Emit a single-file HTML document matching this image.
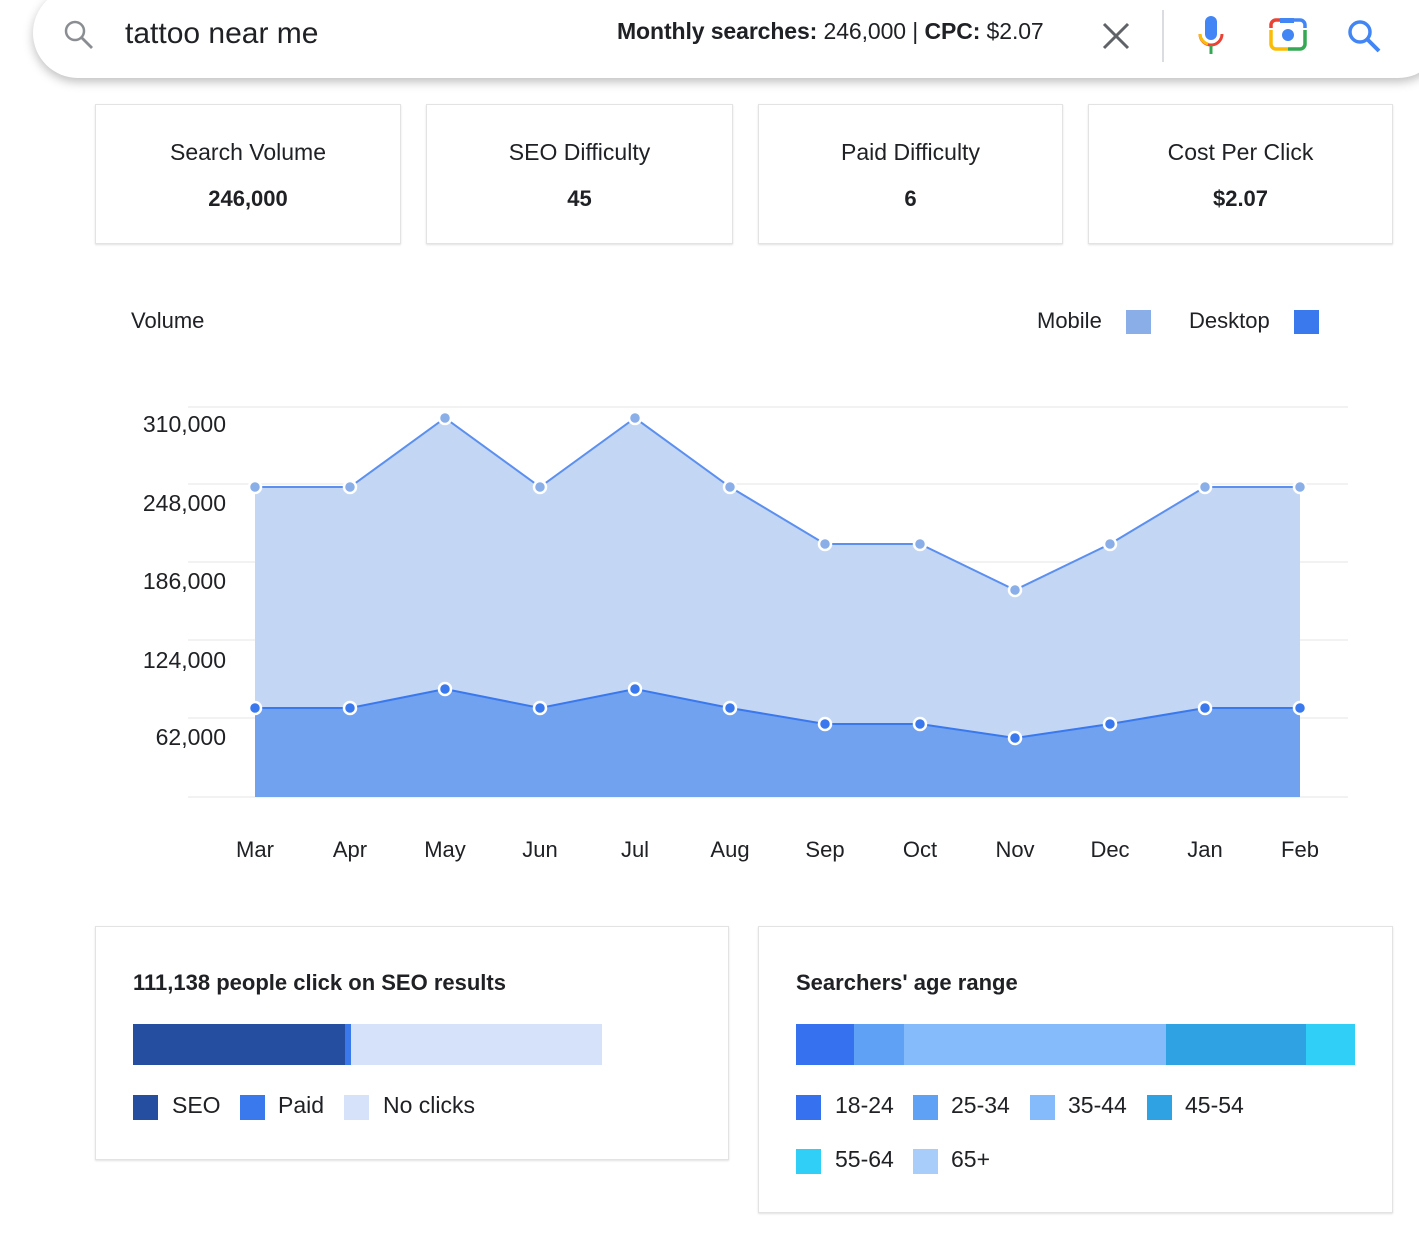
<!DOCTYPE html>
<html><head><meta charset="utf-8"><style>
*{margin:0;padding:0;box-sizing:border-box}
body{width:1419px;height:1257px;background:#fff;font-family:"Liberation Sans",Arial,sans-serif;color:#202124;position:relative;overflow:hidden}
.bar{position:absolute;left:33px;top:-12px;width:1410px;height:90px;border-radius:45px;background:#fff;box-shadow:0 4px 10px rgba(0,0,0,.25)}
.abs{position:absolute}
.card{position:absolute;top:104px;height:140px;border:1px solid #e3e3e3;box-shadow:0 1px 2px rgba(0,0,0,.12);text-align:center}
.card .t{margin-top:34px;font-size:23px}
.card .v{margin-top:20px;font-size:22px;font-weight:bold}
.box{position:absolute;border:1px solid #e3e3e3;box-shadow:0 1px 2px rgba(0,0,0,.12)}
.lg{position:absolute;font-size:23px}
.sw{position:absolute;width:25px;height:25px}
</style></head><body>
<div class="bar"></div>
<svg class="abs" style="left:62px;top:18px" width="34" height="34" viewBox="0 0 34 34"><circle cx="13" cy="13" r="9" fill="none" stroke="#8a8d91" stroke-width="2.5"/><line x1="19.5" y1="19.5" x2="30" y2="30" stroke="#8a8d91" stroke-width="2.8"/></svg>
<div class="abs" style="left:125px;top:17px;font-size:30px">tattoo near me</div>
<div class="abs" style="left:617px;top:18px;font-size:23px;letter-spacing:-0.1px"><b>Monthly searches:</b> 246,000 | <b>CPC:</b> $2.07</div>
<svg class="abs" style="left:1100px;top:20px" width="32" height="32"><path d="M4 4L28 28M28 4L4 28" stroke="#5f6368" stroke-width="3"/></svg>
<div class="abs" style="left:1162px;top:10px;width:2px;height:52px;background:#dadce0"></div>
<svg class="abs" style="left:1195px;top:14px" width="32" height="44" viewBox="0 0 32 44"><rect x="10" y="2" width="12" height="24" rx="6" fill="#4285f4"/><path d="M5 20a11 11 0 0 0 22 0" fill="none" stroke="#ea4335" stroke-width="3"/><path d="M5 20a11 11 0 0 0 8 10" fill="none" stroke="#fbbc04" stroke-width="3"/><rect x="14.5" y="31" width="3" height="9" fill="#34a853"/></svg>
<svg class="abs" style="left:1267px;top:16px" width="42" height="38" viewBox="0 0 42 38"><path d="M4 12v-3a5 5 0 0 1 5-5h6" fill="none" stroke="#ea4335" stroke-width="3.5"/><path d="M27 4h6a5 5 0 0 1 5 5v3" fill="none" stroke="#4285f4" stroke-width="3.5"/><path d="M4 14v14a5 5 0 0 0 5 5h12" fill="none" stroke="#fbbc04" stroke-width="3.5"/><path d="M21 33h12a5 5 0 0 0 5-5v-14" fill="none" stroke="#34a853" stroke-width="3.5"/><rect x="13" y="2" width="14" height="5" fill="#4285f4"/><circle cx="21" cy="19" r="6" fill="#4285f4"/></svg>
<svg class="abs" style="left:1345px;top:17px" width="38" height="38"><circle cx="15" cy="15" r="10" fill="none" stroke="#4285f4" stroke-width="3.5"/><line x1="22" y1="22" x2="34" y2="34" stroke="#4285f4" stroke-width="4"/></svg>

<div class="card" style="left:95px;width:306px"><div class="t">Search Volume</div><div class="v">246,000</div></div>
<div class="card" style="left:426px;width:307px"><div class="t">SEO Difficulty</div><div class="v">45</div></div>
<div class="card" style="left:758px;width:305px"><div class="t">Paid Difficulty</div><div class="v">6</div></div>
<div class="card" style="left:1088px;width:305px"><div class="t">Cost Per Click</div><div class="v">$2.07</div></div>

<div class="abs" style="left:131px;top:308px;font-size:22px">Volume</div>
<div class="abs" style="left:1037px;top:308px;font-size:22px">Mobile</div>
<div class="abs" style="left:1126px;top:310px;width:25px;height:24px;background:#8aaee8"></div>
<div class="abs" style="left:1189px;top:308px;font-size:22px">Desktop</div>
<div class="abs" style="left:1294px;top:310px;width:25px;height:24px;background:#3a78ee"></div>

<svg class="abs" style="left:0;top:0" width="1419" height="900">
<g stroke="#eeeeee" stroke-width="1.5"><line x1="188" y1="407" x2="1348" y2="407"/><line x1="188" y1="484" x2="1348" y2="484"/><line x1="188" y1="562" x2="1348" y2="562"/><line x1="188" y1="640" x2="1348" y2="640"/><line x1="188" y1="718" x2="1348" y2="718"/><line x1="188" y1="797" x2="1348" y2="797"/></g>
<g font-size="23" fill="#202124" text-anchor="end" font-family="Liberation Sans, sans-serif"><text x="226" y="432">310,000</text><text x="226" y="511">248,000</text><text x="226" y="589">186,000</text><text x="226" y="668">124,000</text><text x="226" y="745">62,000</text></g>
<path d="M255 487L350 487L445 418L540 487L635 418L730 487L825 544L920 544L1015 590L1110 544L1205 487L1300 487L1300 797L255 797Z" fill="#c3d6f3"/>
<path d="M255 487L350 487L445 418L540 487L635 418L730 487L825 544L920 544L1015 590L1110 544L1205 487L1300 487" fill="none" stroke="#5b8ff0" stroke-width="2"/>
<path d="M255 708L350 708L445 689L540 708L635 689L730 708L825 724L920 724L1015 738L1110 724L1205 708L1300 708L1300 797L255 797Z" fill="#71a2ef"/>
<path d="M255 708L350 708L445 689L540 708L635 689L730 708L825 724L920 724L1015 738L1110 724L1205 708L1300 708" fill="none" stroke="#3a78ee" stroke-width="2"/>
<g fill="#8aaee8" stroke="#fff" stroke-width="2.5"><circle cx="255" cy="487" r="6"/><circle cx="350" cy="487" r="6"/><circle cx="445" cy="418" r="6"/><circle cx="540" cy="487" r="6"/><circle cx="635" cy="418" r="6"/><circle cx="730" cy="487" r="6"/><circle cx="825" cy="544" r="6"/><circle cx="920" cy="544" r="6"/><circle cx="1015" cy="590" r="6"/><circle cx="1110" cy="544" r="6"/><circle cx="1205" cy="487" r="6"/><circle cx="1300" cy="487" r="6"/></g>
<g fill="#3a78ee" stroke="#fff" stroke-width="2.5"><circle cx="255" cy="708" r="6"/><circle cx="350" cy="708" r="6"/><circle cx="445" cy="689" r="6"/><circle cx="540" cy="708" r="6"/><circle cx="635" cy="689" r="6"/><circle cx="730" cy="708" r="6"/><circle cx="825" cy="724" r="6"/><circle cx="920" cy="724" r="6"/><circle cx="1015" cy="738" r="6"/><circle cx="1110" cy="724" r="6"/><circle cx="1205" cy="708" r="6"/><circle cx="1300" cy="708" r="6"/></g>
<g font-size="22" fill="#202124" text-anchor="middle" font-family="Liberation Sans, sans-serif"><text x="255" y="857">Mar</text><text x="350" y="857">Apr</text><text x="445" y="857">May</text><text x="540" y="857">Jun</text><text x="635" y="857">Jul</text><text x="730" y="857">Aug</text><text x="825" y="857">Sep</text><text x="920" y="857">Oct</text><text x="1015" y="857">Nov</text><text x="1110" y="857">Dec</text><text x="1205" y="857">Jan</text><text x="1300" y="857">Feb</text></g>
</svg>

<div class="box" style="left:95px;top:926px;width:634px;height:234px"></div>
<div class="abs" style="left:133px;top:970px;font-size:22px;font-weight:bold">111,138 people click on SEO results</div>
<div class="abs" style="left:133px;top:1024px;width:212px;height:41px;background:#264ea0"></div>
<div class="abs" style="left:345px;top:1024px;width:6px;height:41px;background:#3a78ee"></div>
<div class="abs" style="left:351px;top:1024px;width:251px;height:41px;background:#d6e2fa"></div>
<div class="sw" style="left:133px;top:1095px;background:#264ea0"></div><div class="lg" style="left:172px;top:1092px">SEO</div>
<div class="sw" style="left:240px;top:1095px;background:#3a78ee"></div><div class="lg" style="left:278px;top:1092px">Paid</div>
<div class="sw" style="left:344px;top:1095px;background:#d6e2fa"></div><div class="lg" style="left:383px;top:1092px">No clicks</div>

<div class="box" style="left:758px;top:926px;width:635px;height:287px"></div>
<div class="abs" style="left:796px;top:970px;font-size:22px;font-weight:bold">Searchers' age range</div>
<div class="abs" style="left:796px;top:1024px;width:58px;height:41px;background:#3672ef"></div>
<div class="abs" style="left:854px;top:1024px;width:50px;height:41px;background:#5fa1f5"></div>
<div class="abs" style="left:904px;top:1024px;width:262px;height:41px;background:#85bbfa"></div>
<div class="abs" style="left:1166px;top:1024px;width:140px;height:41px;background:#2fa2e4"></div>
<div class="abs" style="left:1306px;top:1024px;width:49px;height:41px;background:#30cff8"></div>
<div class="sw" style="left:796px;top:1095px;background:#3672ef"></div><div class="lg" style="left:835px;top:1092px">18-24</div>
<div class="sw" style="left:913px;top:1095px;background:#5fa1f5"></div><div class="lg" style="left:951px;top:1092px">25-34</div>
<div class="sw" style="left:1030px;top:1095px;background:#85bbfa"></div><div class="lg" style="left:1068px;top:1092px">35-44</div>
<div class="sw" style="left:1147px;top:1095px;background:#2fa2e4"></div><div class="lg" style="left:1185px;top:1092px">45-54</div>
<div class="sw" style="left:796px;top:1149px;background:#30cff8"></div><div class="lg" style="left:835px;top:1146px">55-64</div>
<div class="sw" style="left:913px;top:1149px;background:#a8cdfb"></div><div class="lg" style="left:951px;top:1146px">65+</div>
</body></html>
